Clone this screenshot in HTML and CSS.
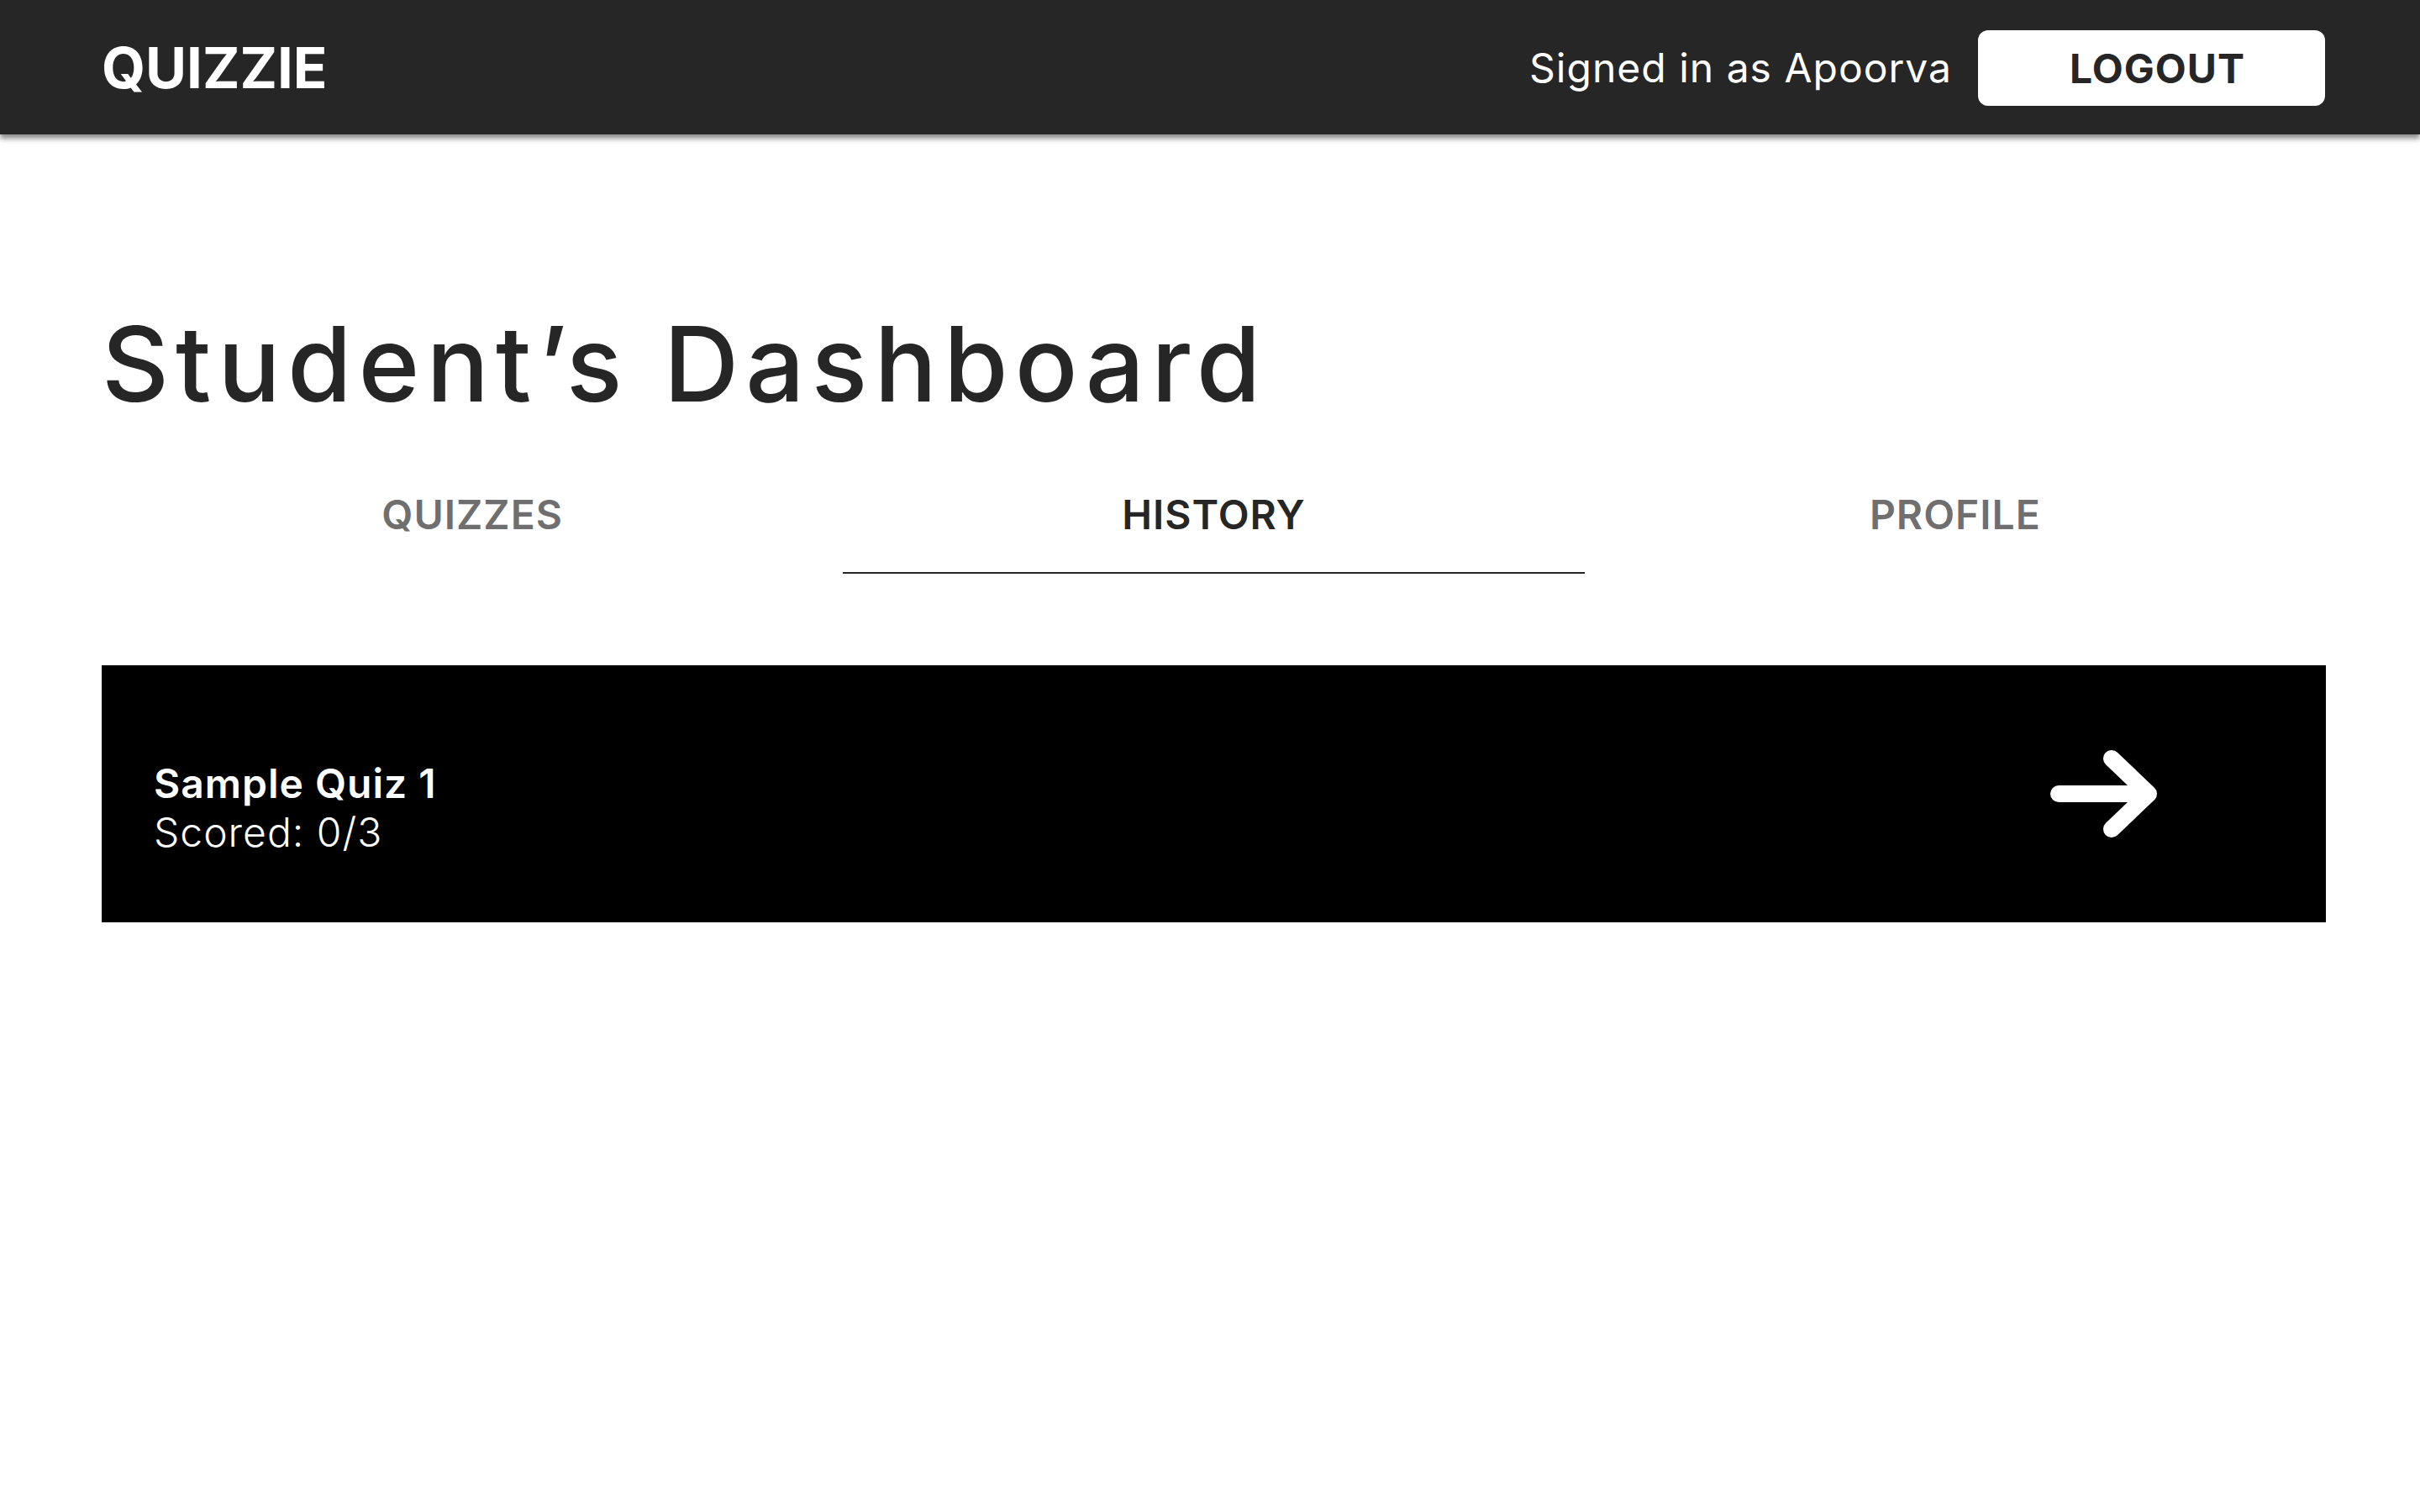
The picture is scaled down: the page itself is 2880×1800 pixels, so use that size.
FILE: index.html
```html
<!DOCTYPE html>
<html lang="en">
<head>
<meta charset="utf-8">
<title>Quizzie - Student's Dashboard</title>
<link rel="stylesheet" href="styles.css">
</head>
<body>
<header class="topbar">
  <div class="logo">QUIZZIE</div>
  <div class="user">
    <span class="signed">Signed in as Apoorva</span>
    <button class="logout">LOGOUT</button>
  </div>
</header>
<main class="page">
  <h1 class="title">Student’s Dashboard</h1>
  <nav class="tabs">
    <div class="tab">QUIZZES</div>
    <div class="tab active">HISTORY</div>
    <div class="tab">PROFILE</div>
  </nav>
  <section class="card">
    <div class="card-text">
      <div class="quiz-name">Sample Quiz 1</div>
      <div class="quiz-score">Scored: 0/3</div>
    </div>
    <svg class="arrow" width="128" height="106" viewBox="0 0 128 106" aria-hidden="true">
      <path d="M10 53 H116" stroke="#fff" stroke-width="20" stroke-linecap="round" fill="none"/>
      <path d="M73 11 L117 53 L73 95" stroke="#fff" stroke-width="20" stroke-linecap="round" stroke-linejoin="round" fill="none"/>
    </svg>
  </section>
</main>
</body>
</html>
```

FILE: styles.css
```css
html, body {
  margin: 0;
  padding: 0;
  background: #ffffff;
}

body {
  font-family: Inter, "Open Sans", "DejaVu Sans", sans-serif;
  color: #262626;
}

.topbar {
  height: 160px;
  box-sizing: border-box;
  background: #262626;
  display: flex;
  align-items: center;
  justify-content: space-between;
  padding: 0 113px 0 121px;
  box-shadow: 0 5px 6px rgba(0, 0, 0, 0.45);
  position: relative;
}

.logo {
  color: #ffffff;
  font-size: 67px;
  font-weight: 700;
  letter-spacing: 0;
  line-height: 1;
}

.user {
  display: flex;
  align-items: center;
  gap: 31px;
}

.signed {
  color: #ffffff;
  font-size: 48px;
  font-weight: 400;
  letter-spacing: 1px;
}

.logout {
  width: 413px;
  height: 90px;
  border: none;
  border-radius: 12px;
  background: #ffffff;
  color: #262626;
  font-family: inherit;
  font-size: 48px;
  font-weight: 700;
  letter-spacing: 1px;
  padding: 0 0 0 14px;
  margin-top: 2px;
}

.page {
  padding: 198px 112px 0 121px;
}

.title {
  margin: 0;
  font-size: 124px;
  line-height: 150px;
  font-weight: 500;
  letter-spacing: 8px;
  color: #262626;
}

.tabs {
  display: grid;
  grid-template-columns: 1fr 1fr 1fr;
  margin-top: 76px;
}

.tab {
  text-align: center;
  font-size: 48px;
  line-height: 58px;
  font-weight: 600;
  letter-spacing: 1px;
  color: #6f6f6f;
  padding-bottom: 39px;
  border-bottom: 2px solid transparent;
}

.tab.active {
  color: #262626;
  border-bottom-color: #262626;
}

.card {
  margin-top: 109px;
  height: 306px;
  box-sizing: border-box;
  background: #000000;
  display: flex;
  align-items: center;
  justify-content: space-between;
  padding: 0 200px 0 62px;
}

.card-text {
  padding-top: 33px;
  color: #ffffff;
}

.quiz-name {
  font-size: 48px;
  line-height: 58px;
  font-weight: 600;
  letter-spacing: 1px;
}

.quiz-score {
  font-size: 48px;
  line-height: 58px;
  font-weight: 300;
  letter-spacing: 1px;
}

.arrow {
  display: block;
}
```
